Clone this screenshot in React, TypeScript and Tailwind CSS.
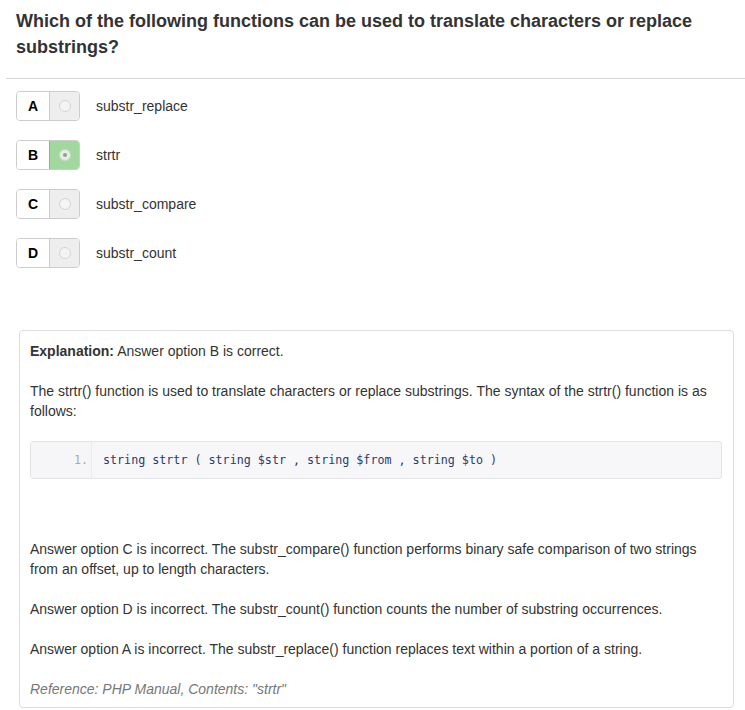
import type { ReactNode } from "react";

const options = [
  { key: "A", label: "substr_replace", selected: false },
  { key: "B", label: "strtr", selected: true },
  { key: "C", label: "substr_compare", selected: false },
  { key: "D", label: "substr_count", selected: false }
];

export default function App() {
  return (
    <main className="w-[745px] h-[710px] bg-white text-[#333] overflow-hidden font-['Liberation_Sans',Arial,sans-serif]">
      <h1 className="pt-[8px] pl-4 pr-4 text-[18px] leading-[26px] font-bold text-[#333]">
        Which of the following functions can be used to translate characters or replace substrings?
      </h1>
      <hr className="mt-[18px] ml-[6px] border-0 border-t border-[#d5d5d5]" />

      <div className="mt-3 pl-4 flex flex-col gap-[19px]">
        {options.map((option) => (
          <OptionRow key={option.key} letter={option.key} label={option.label} selected={option.selected} />
        ))}
      </div>

      <section className="mt-[62px] ml-[19px] w-[715px] border border-[#ddd] rounded-[4px] pt-[10px] pb-[8px] px-[10px] text-[14px] leading-[20px]">
        <p>
          <strong>Explanation:</strong> Answer option B is correct.
        </p>
        <p className="mt-5">
          The strtr() function is used to translate characters or replace substrings. The syntax of the strtr() function is as follows:
        </p>
        <CodeBlock>string strtr ( string $str , string $from , string $to )</CodeBlock>
        <p className="mt-[60px]">
          Answer option C is incorrect. The substr_compare() function performs binary safe comparison of two strings from an offset, up to length characters.
        </p>
        <p className="mt-5">Answer option D is incorrect. The substr_count() function counts the number of substring occurrences.</p>
        <p className="mt-5">Answer option A is incorrect. The substr_replace() function replaces text within a portion of a string.</p>
        <p className="mt-5 italic text-[#777]">Reference: PHP Manual, Contents: "strtr"</p>
      </section>
    </main>
  );
}

function OptionRow(props: { letter: string; label: string; selected: boolean }) {
  return (
    <div className="flex items-center">
      <div className="flex h-[30px] w-[64px] rounded-[4px] border border-[#ccc] overflow-hidden">
        <div className="w-[32px] flex items-center justify-center bg-white text-[14px] font-bold text-black">
          {props.letter}
        </div>
        <div
          className={
            props.selected
              ? "flex-1 flex items-center justify-center bg-[#a3d7a0] border-l border-[#7cc37a]"
              : "flex-1 flex items-center justify-center bg-[#eee] border-l border-[#ccc]"
          }
        >
          <span
            className={
              props.selected
                ? "w-[12px] h-[12px] rounded-full border border-[#c8dcc6] bg-[#e4eee3] flex items-center justify-center"
                : "w-[12px] h-[12px] rounded-full border border-[#d4d4d4] bg-[#f4f4f4] flex items-center justify-center"
            }
          >
            {props.selected && <span className="w-[4px] h-[4px] rounded-full bg-[#9a9a9a]" />}
          </span>
        </div>
      </div>
      <span className="ml-4 text-[14px] text-[#333]">{props.label}</span>
    </div>
  );
}

function CodeBlock(props: { children: ReactNode }) {
  return (
    <div className="mt-5 flex h-[38px] w-[692px] rounded-[3px] border border-[#e3e3e8] bg-[#f7f7f9] font-['DejaVu_Sans_Mono',monospace] text-[11.7px]">
      <div className="w-[61px] flex items-center justify-end pr-[3px] text-[#aaa] border-r border-[#ececf0] bg-[#f6f6f8]">1.</div>
      <div className="flex items-center pl-[11px] text-[#2d3a6a] whitespace-pre">{props.children}</div>
    </div>
  );
}
